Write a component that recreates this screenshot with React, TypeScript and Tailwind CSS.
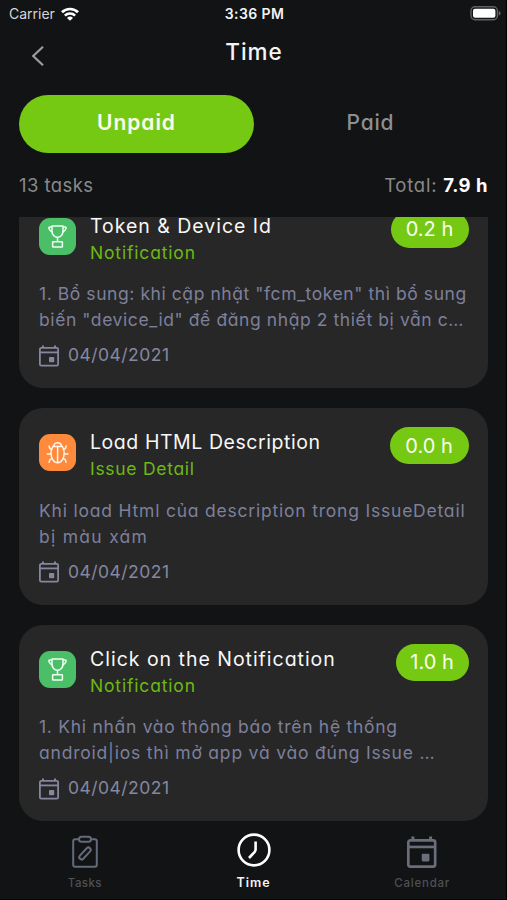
import type { ReactNode } from "react";

type Task = {
  kind: "trophy" | "bug";
  title: string;
  titleClass: string;
  project: string;
  projectClass: string;
  hours: string;
  hoursClass: string;
  lines: { text: string; className: string }[];
};

const tasks: Task[] = [
  {
    kind: "trophy",
    title: "Token & Device Id",
    titleClass: "tracking-[0.98px]",
    project: "Notification",
    projectClass: "tracking-[0.83px]",
    hours: "0.2 h",
    hoursClass: "w-[78px]",
    lines: [
      { text: '1. Bổ sung: khi cập nhật "fcm_token" thì bổ sung', className: "tracking-[0.57px]" },
      { text: 'biến "device_id" để đăng nhập 2 thiết bị vẫn c…', className: "tracking-[0.59px]" },
    ],
  },
  {
    kind: "bug",
    title: "Load HTML Description",
    titleClass: "tracking-[0.56px]",
    project: "Issue Detail",
    projectClass: "tracking-[0.71px]",
    hours: "0.0 h",
    hoursClass: "w-[79px]",
    lines: [
      { text: "Khi load Html của description trong IssueDetail", className: "tracking-[0.79px]" },
      { text: "bị màu xám", className: "tracking-[1.28px]" },
    ],
  },
  {
    kind: "trophy",
    title: "Click on the Notification",
    titleClass: "tracking-[0.98px]",
    project: "Notification",
    projectClass: "tracking-[0.83px]",
    hours: "1.0 h",
    hoursClass: "w-[73px]",
    lines: [
      { text: "1. Khi nhấn vào thông báo trên hệ thống", className: "tracking-[0.72px]" },
      { text: "android|ios thì mở app và vào đúng Issue …", className: "tracking-[0.8px]" },
    ],
  },
];

function CalendarIcon({ className }: { className: string }) {
  return (
    <svg viewBox="0 0 20 22" className={className} fill="none" stroke="currentColor" strokeWidth="1.8">
      <rect x="0.9" y="2.9" width="18.2" height="17.8" rx="1.4" />
      <path d="M1 7.4h18" />
      <path d="M4 0.4v2.4M16 0.4v2.4" strokeWidth="2" />
      <rect x="10" y="12" width="5.2" height="5.2" rx="0.7" fill="currentColor" stroke="none" />
    </svg>
  );
}

function TrophyIcon() {
  return (
    <svg viewBox="0 0 37 37" className="size-full" fill="none" stroke="#effff2" strokeWidth="1.5" strokeLinejoin="round">
      <path d="M13 8h11v5c0 3.5-2.4 6.2-5.5 6.2S13 16.5 13 13z" />
      <path d="M13 9h-2.3c-.8 0-1 .7-.7 1.5.5 1.5 1.6 2.9 3.6 3.7M24 9h2.3c.8 0 1 .7.7 1.5-.5 1.5-1.6 2.9-3.6 3.7" />
      <path d="M18.5 19.2v4.4" />
      <rect x="13.6" y="23.7" width="9.8" height="5.2" rx="0.5" />
    </svg>
  );
}

function BugIcon() {
  return (
    <svg viewBox="0 0 37 37" className="size-full" fill="none" stroke="#fff4ea" strokeWidth="1.5" strokeLinecap="round">
      <path d="M14.7 12.2c.3-2.3 1.7-3.5 3.9-3.5s3.6 1.2 3.9 3.5" />
      <path d="M13.9 12.4h9.4c1.2 1.9 1.9 4.1 1.9 6.6 0 5.3-2.8 9.8-6.6 9.8S12 24.3 12 19c0-2.5.7-4.7 1.9-6.6z" />
      <path d="M18.6 12.6v16" />
      <path d="M12.8 15.6l-2-1.2-.7-2.4M24.4 15.6l2-1.2.7-2.4M11.8 20H8.2M25.4 20H29M13 24.4l-2.1 1.3-.8 2.6M24.2 24.4l2.1 1.3.8 2.6" />
    </svg>
  );
}

function TaskCard({ task }: { task: Task }) {
  return (
    <article className="h-[196.5px] shrink-0 rounded-[24px] bg-[#272727] pl-5 pr-[19px]">
      <div className="flex items-start">
        <div
          className={
            task.kind === "bug"
              ? "mt-[26px] size-[37px] rounded-[11px] bg-[#ff8a3c]"
              : "mt-[26px] size-[37px] rounded-[11px] bg-[#4abf68]"
          }
        >
          {task.kind === "bug" ? <BugIcon /> : <TrophyIcon />}
        </div>
        <div className="ml-[14px] mt-[25px] flex-1 whitespace-nowrap">
          <h2 className={`text-[19.5px] leading-[18px] text-[#f7f7f7] ${task.titleClass}`}>{task.title}</h2>
          <p className={`mt-[5px] text-[17.5px] leading-[26px] text-[#6cba12] ${task.projectClass}`}>{task.project}</p>
        </div>
        <span
          className={`mt-[19px] flex h-[37px] items-center justify-center rounded-full bg-[#76c913] pr-px text-[20px] text-[#fbfff0] ${task.hoursClass}`}
        >
          {task.hours}
        </span>
      </div>
      <div className="mt-[15.5px] whitespace-nowrap text-[17.5px] leading-[26px] text-[#7d809b]">
        {task.lines.map((line) => (
          <p key={line.text} className={line.className}>
            {line.text}
          </p>
        ))}
      </div>
      <div className="mt-[10.5px] flex h-6 items-center text-[#8587a0]">
        <CalendarIcon className="h-[22px] w-5" />
        <span className="ml-[9px] text-[17.5px] tracking-[0.47px]">04/04/2021</span>
      </div>
    </article>
  );
}

function NavItem({ icon, children, className }: { icon: ReactNode; children: ReactNode; className: string }) {
  return (
    <div className={`flex flex-1 flex-col items-center ${className}`}>
      <div className="flex h-[58px] items-center justify-center">{icon}</div>
      <span className="-mt-1 leading-4">{children}</span>
    </div>
  );
}

export default function App() {
  return (
    <div className="flex h-[900px] w-[507px] flex-col overflow-hidden border-b border-r border-black bg-[#111315] font-['Inter','Noto_Sans',sans-serif] [font-feature-settings:'cv11']">
      <div className="mb-px grid h-[27px] shrink-0 grid-cols-3 items-center pl-[9px] pr-[5px] text-[14px] [font-feature-settings:normal]">
        <div className="flex items-center gap-[6px] text-[#d6d6d6]">
          <span>Carrier</span>
          <svg viewBox="0 0 18 14" className="h-[14px] w-[18px]" fill="none" stroke="#fff" strokeWidth="2.7">
            <path d="M1 5.3a11.4 11.4 0 0 1 16 0M3.9 8.6a7.3 7.3 0 0 1 10.2 0" />
            <path d="M9 13.8L6 10.9a4.3 4.3 0 0 1 6 0z" fill="#fff" stroke="none" />
          </svg>
        </div>
        <span className="-ml-px text-center font-semibold tracking-[0.4px] text-[#f2f2f2]">3:36 PM</span>
        <svg viewBox="0 0 31 15" className="h-[15px] w-[31px] justify-self-end">
          <rect x="1" y="0.8" width="26.4" height="12.9" rx="4" fill="#111315" stroke="#606162" strokeWidth="1.4" />
          <rect x="3" y="2.7" width="22.4" height="9.1" rx="2" fill="#fff" />
          <path d="M28.7 4.9c1.3.4 2 1.2 2 2.3s-.7 1.9-2 2.3z" fill="#606162" />
        </svg>
      </div>

      <header className="grid h-[67px] shrink-0 grid-cols-3">
        <svg viewBox="0 0 14 22" className="ml-[31px] mt-[17px] h-[22px] w-[14px]" fill="none" stroke="#9d9d9d" strokeWidth="2.2">
          <path d="M12 1.7L2.2 11 12 20.3" />
        </svg>
        <h1 className="mt-[11px] pl-[2px] text-center text-[22.5px] font-medium leading-[26px] tracking-[1px] text-[#f5f5f5]">Time</h1>
      </header>

      <div className="flex h-[57.5px] shrink-0 px-[19px] text-[21px] leading-[55px]">
        <div className="w-[235px] shrink-0 rounded-full bg-[#76c913] text-center font-semibold tracking-[0.95px] text-[#fbffec]">Unpaid</div>
        <div className="flex-1 text-center font-medium tracking-[0.8px] text-[#8e8f90]">Paid</div>
      </div>

      <div className="mt-[21.5px] flex h-6 shrink-0 items-center justify-between pl-[19px] pr-[18px] text-[18.5px] text-[#88898a]">
        <span className="tracking-[0.42px]">13 tasks</span>
        <span className="tracking-[0.75px]">
          Total: <b className="font-bold tracking-[0.5px] text-white">7.9 h</b>
        </span>
      </div>

      <main className="mt-[19px] h-[604px] shrink-0 overflow-hidden pl-[19px] pr-[18px]">
        <div className="-mt-[25.5px] flex flex-col gap-5">
          {tasks.map((task) => (
            <TaskCard key={task.title} task={task} />
          ))}
        </div>
      </main>

      <nav className="flex h-[78px] shrink-0 pl-px [font-feature-settings:normal]">
        <NavItem
          className="text-[11.5px] font-medium tracking-[0.4px] text-[#4e5156]"
          icon={
            <svg viewBox="0 0 28 34" className="mt-[3px] h-[34px] w-7 text-[#636b7a]" fill="none" stroke="currentColor" strokeWidth="2">
              <path d="M7.8 4.3H4.2a2 2 0 0 0-2 2v23.4a2 2 0 0 0 2 2h19.6a2 2 0 0 0 2-2V6.3a2 2 0 0 0-2-2h-3.6" />
              <rect x="8" y="1.7" width="12" height="5" rx="2.5" />
              <rect x="-7.3" y="-2.3" width="14.6" height="4.6" rx="2.3" transform="translate(14 18.5) rotate(-47)" />
            </svg>
          }
        >
          Tasks
        </NavItem>
        <NavItem
          className="pl-px text-[12.5px] font-semibold tracking-[1px] text-[#f4f4f4]"
          icon={
            <svg viewBox="0 0 34 34" className="h-[34px] w-[34px]" fill="none" stroke="#fff" strokeWidth="2.6">
              <circle cx="17" cy="17" r="15.4" />
              <path d="M18.6 8.5v8.1c0 .9-.3 1.5-.9 2.2L12 25" />
            </svg>
          }
        >
          Time
        </NavItem>
        <NavItem
          className="pl-px text-[11.5px] font-medium tracking-[0.75px] text-[#4e5156]"
          icon={<CalendarIcon className="mt-[5px] h-[32.5px] w-[29.5px] text-[#6a6e7c]" />}
        >
          Calendar
        </NavItem>
      </nav>
    </div>
  );
}
